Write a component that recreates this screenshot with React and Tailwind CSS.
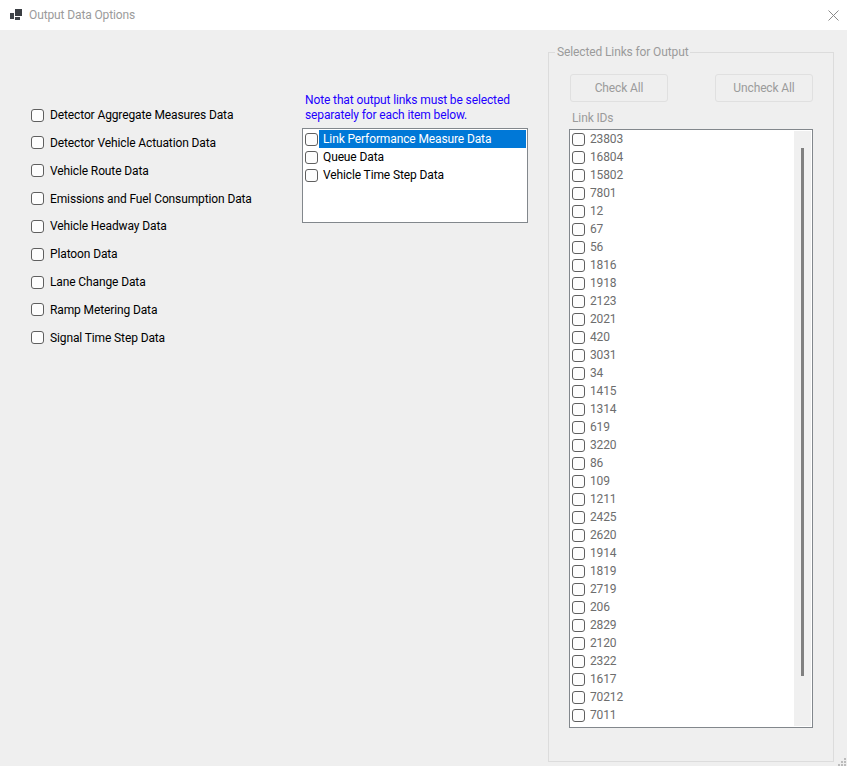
const outputs = [
  'Detector Aggregate Measures Data',
  'Detector Vehicle Actuation Data',
  'Vehicle Route Data',
  'Emissions and Fuel Consumption Data',
  'Vehicle Headway Data',
  'Platoon Data',
  'Lane Change Data',
  'Ramp Metering Data',
  'Signal Time Step Data',
]

const linkIds = [
  '23803', '16804', '15802', '7801', '12', '67', '56', '1816', '1918', '2123', '2021', '420',
  '3031', '34', '1415', '1314', '619', '3220', '86', '109', '1211', '2425', '2620', '1914',
  '1819', '2719', '206', '2829', '2120', '2322', '1617', '70212', '7011',
]

const Box = () => (
  <span className="block w-[13px] h-[13px] shrink-0 rounded-[3px] border border-[#5f5f5f] bg-[#fdfdfd]" />
)

const App = () => {
  return (
    <div className="relative w-[847px] h-[766px] overflow-hidden flex flex-col bg-[#efefef] text-[12px] tracking-[-0.12px] leading-[16px] text-black font-['Roboto',sans-serif]">
      {/* title bar */}
      <div className="h-[30px] shrink-0 bg-white flex items-center pl-[10px] pr-[8px]">
        <svg width="12" height="11" viewBox="0 0 12 11" className="mb-[2px]">
          <rect x="0" y="4" width="4" height="6" fill="#3f4449" />
          <rect x="5" y="0" width="7" height="7" fill="#3a3e43" />
          <rect x="5" y="8" width="5" height="3" fill="#3f4449" />
        </svg>
        <span className="ml-[7px] text-[#9b9b9b]">Output Data Options</span>
        <svg width="11" height="11" viewBox="0 0 11 11" className="ml-auto" fill="none" stroke="#8a8a8a" strokeWidth="1">
          <path d="M0.5 0.5 L10.5 10.5 M10.5 0.5 L0.5 10.5" />
        </svg>
      </div>

      <div className="flex-1 flex items-start pl-[31px]">
        {/* left column */}
        <div className="w-[271px] shrink-0 pt-[77px] flex flex-col gap-[11.85px]">
          {outputs.map((label) => (
            <div key={label} className="flex items-center gap-[6px] h-[16px]">
              <Box />
              <span className="whitespace-nowrap">{label}</span>
            </div>
          ))}
        </div>

        {/* middle column */}
        <div className="w-[226px] shrink-0 pt-[63px]">
          <p className="pl-[3px] text-[#2200ff] leading-[15px] whitespace-nowrap">
            Note that output links must be selected
            <br />
            separately for each item below.
          </p>
          <div className="mt-[5px] h-[95px] border border-[#82878c] bg-white pt-[1px] pl-[2px] pr-[1px]">
            {['Link Performance Measure Data', 'Queue Data', 'Vehicle Time Step Data'].map((label, i) => (
              <div key={label} className="flex items-center h-[18px]">
                <Box />
                <span className={i === 0 ? 'ml-[1px] flex-1 h-[18px] pl-[4px] leading-[18px] bg-[#0078d7] text-white' : 'ml-[2px] pl-[3px]'}>
                  {label}
                </span>
              </div>
            ))}
          </div>
        </div>

        {/* selected links */}
        <fieldset className="ml-[20px] mt-[14px] w-[286px] h-[718px] border border-[#dcdcdc] pl-[20px] pr-[20px] text-[#9b9b9b]">
          <legend className="ml-[-14px] px-[2px] leading-[16px]">Selected Links for Output</legend>
          <div className="flex justify-between mt-[14px]">
            <button className="ml-[1px] w-[98px] h-[28px] rounded-[3px] border border-[#e0e0e0] bg-[#efefef] text-center">Check All</button>
            <button className="w-[98px] h-[28px] rounded-[3px] border border-[#e0e0e0] bg-[#efefef] text-center">Uncheck All</button>
          </div>
          <div className="mt-[8px] pl-[3px]">Link IDs</div>
          <div className="mt-[3px] h-[599px] border border-[#82878c] bg-white flex pr-[1px] pb-[1px] text-[#6d6d6d]">
            <div className="flex-1 pl-[2px]">
              {linkIds.map((id) => (
                <div key={id} className="flex items-center gap-[5px] h-[18px]">
                  <Box />
                  <span>{id}</span>
                </div>
              ))}
            </div>
            <div className="w-[17px] mt-[1px] bg-[#f0f0f0] pt-[17px] pl-[7px]">
              <div className="w-[3px] h-[528px] bg-[#808080]" />
            </div>
          </div>
        </fieldset>
      </div>

      {/* size grip */}
      <svg width="9" height="8" viewBox="0 0 9 8" className="absolute right-0 bottom-0" fill="#bcbcbc">
        <rect x="6" y="0" width="2" height="2" />
        <rect x="3" y="3" width="2" height="2" />
        <rect x="6" y="3" width="2" height="2" />
        <rect x="0" y="6" width="2" height="2" />
        <rect x="3" y="6" width="2" height="2" />
        <rect x="6" y="6" width="2" height="2" />
      </svg>
    </div>
  )
}

export default App
